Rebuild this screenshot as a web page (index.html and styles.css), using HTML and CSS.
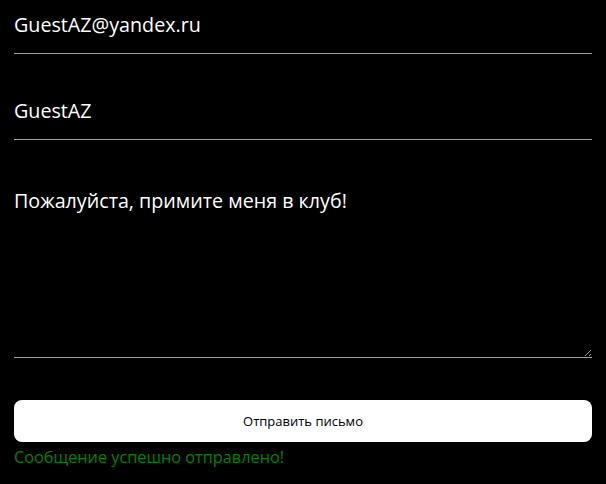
FILE: index.html
```html
<!DOCTYPE html>
<html lang="ru">
<head>
<meta charset="utf-8">
<title>Форма</title>
<link rel="stylesheet" href="styles.css">
</head>
<body>
<form class="form">
  <input class="field" type="email" value="GuestAZ@yandex.ru">
  <input class="field" type="text" value="GuestAZ">
  <textarea class="field area">Пожалуйста, примите меня в клуб!</textarea>
  <button class="btn" type="button">Отправить письмо</button>
  <p class="msg">Сообщение успешно отправлено!</p>
</form>
</body>
</html>
```
FILE: styles.css
```css
html, body {
  margin: 0;
  background: #000;
}
.form {
  display: flex;
  flex-direction: column;
  padding: 2px 14px 0;
  font-family: "Open Sans", "Noto Sans", sans-serif;
}
.field {
  box-sizing: border-box;
  width: 100%;
  height: 52px;
  margin: 0 0 34px;
  padding: 8px 0 14px;
  background: transparent;
  border: none;
  border-bottom: 1px solid #a0a0a0;
  color: #fff;
  font-family: inherit;
  font-size: 19.7px;
  outline: none;
}
.area {
  height: 184px;
  padding: 14px 0;
  margin-bottom: 42px;
  resize: vertical;
  line-height: 26px;
}
.btn {
  height: 42px;
  border: none;
  border-radius: 8px;
  background: #fff;
  color: #000;
  font-family: inherit;
  font-size: 13px;
}
.msg {
  margin: 4px 0 0;
  color: #008000;
  font-size: 16.3px;
  line-height: 22px;
}
```
